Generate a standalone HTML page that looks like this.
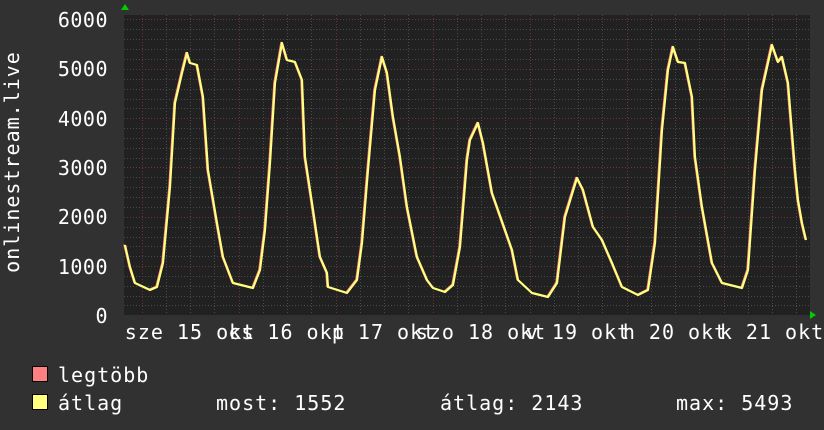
<!DOCTYPE html>
<html><head><meta charset="utf-8"><style>
html,body{margin:0;padding:0;background:#313131;}
svg{display:block;font-family:"DejaVu Sans Mono","Liberation Mono",monospace;}
</style></head><body>
<svg width="824" height="430" viewBox="0 0 824 430" xmlns="http://www.w3.org/2000/svg">
<rect width="824" height="430" fill="#313131"/>
<rect x="124" y="15" width="686" height="300" fill="#212121"/>
<g stroke="#4a4a4a" stroke-width="1" stroke-dasharray="1,2">
<path d="M124 29.5H810M124 39.5H810M124 49.5H810M124 59.5H810M124 79.5H810M124 89.5H810M124 99.5H810M124 108.5H810M124 128.5H810M124 138.5H810M124 148.5H810M124 158.5H810M124 177.5H810M124 187.5H810M124 197.5H810M124 207.5H810M124 227.5H810M124 237.5H810M124 246.5H810M124 256.5H810M124 276.5H810M124 286.5H810M124 296.5H810M124 305.5H810"/>
<path d="M166.5 15V315M190.5 15V315M214.5 15V315M263.5 15V315M287.5 15V315M311.5 15V315M360.5 15V315M384.5 15V315M408.5 15V315M457.5 15V315M481.5 15V315M505.5 15V315M554.5 15V315M578.5 15V315M602.5 15V315M651.5 15V315M675.5 15V315M699.5 15V315M748.5 15V315M772.5 15V315M796.5 15V315"/>
</g>
<g stroke="#6e3434" stroke-width="1" stroke-dasharray="1,2">
<path d="M124 19.5H810M124 69.5H810M124 118.5H810M124 167.5H810M124 217.5H810M124 266.5H810"/>
<path d="M142.5 15V315M239.5 15V315M336.5 15V315M433.5 15V315M530.5 15V315M627.5 15V315M724.5 15V315"/>
</g>
<path d="M121 10l4-6 4 6z" fill="#00cc00"/>
<path d="M810 311l6 4-6 4z" fill="#00cc00"/>
<g fill="none" stroke-linejoin="round">
<polyline stroke="#ff8080" stroke-width="1.5" transform="translate(-1,-0.5)" points="125,245 130,267 135,283 150,290 157,287 163,263 170,187 175,103 182,73 187,53 190,63 197,65 203,97 208,170 217,223 223,257 233,283 253,288 260,270 265,230 270,163 275,83 282,43 287,60 295,62 302,80 305,157 312,203 320,257 327,273 328,287 347,293 357,280 362,243 368,170 375,90 382,57 387,73 393,117 400,157 407,207 417,257 427,280 433,288 445,292 453,285 460,247 467,160 470,140 478,123 483,143 492,193 505,230 512,250 518,280 532,293 548,297 557,283 565,217 577,178 583,190 593,227 602,240 612,263 622,287 638,295 648,290 655,243 662,130 668,70 673,47 678,62 685,63 692,97 695,157 702,207 712,263 722,283 742,288 748,270 755,170 762,90 772,45 778,62 782,57 788,83 795,170 798,200 802,223 806,240"/>
<polyline stroke="#ffff80" stroke-width="2.2" points="125,245 130,267 135,283 150,290 157,287 163,263 170,187 175,103 182,73 187,53 190,63 197,65 203,97 208,170 217,223 223,257 233,283 253,288 260,270 265,230 270,163 275,83 282,43 287,60 295,62 302,80 305,157 312,203 320,257 327,273 328,287 347,293 357,280 362,243 368,170 375,90 382,57 387,73 393,117 400,157 407,207 417,257 427,280 433,288 445,292 453,285 460,247 467,160 470,140 478,123 483,143 492,193 505,230 512,250 518,280 532,293 548,297 557,283 565,217 577,178 583,190 593,227 602,240 612,263 622,287 638,295 648,290 655,243 662,130 668,70 673,47 678,62 685,63 692,97 695,157 702,207 712,263 722,283 742,288 748,270 755,170 762,90 772,45 778,62 782,57 788,83 795,170 798,200 802,223 806,240"/>
</g>
<g fill="#ffffff" font-size="20" text-anchor="end" letter-spacing="0.5">
<text x="108" y="27">6000</text>
<text x="108" y="76">5000</text>
<text x="108" y="126">4000</text>
<text x="108" y="175">3000</text>
<text x="108" y="224">2000</text>
<text x="108" y="274">1000</text>
<text x="108" y="323">0</text>
</g>
<text transform="translate(19,162) rotate(-90)" fill="#fff" font-size="20" text-anchor="middle" letter-spacing="1">onlinestream.live</text>
<g fill="#ffffff" font-size="20" text-anchor="middle" letter-spacing="1">
<text x="190" y="339">sze 15 okt</text>
<text x="287" y="339">cs 16 okt</text>
<text x="384" y="339">p 17 okt</text>
<text x="481" y="339">szo 18 okt</text>
<text x="578" y="339">v 19 okt</text>
<text x="675" y="339">h 20 okt</text>
<text x="772" y="339">k 21 okt</text>
</g>
<rect x="32.5" y="366.5" width="15" height="15" fill="#ff8080" stroke="#000"/>
<rect x="32.5" y="394.5" width="15" height="15" fill="#ffff80" stroke="#000"/>
<g fill="#ffffff" font-size="20" letter-spacing="1">
<text x="58" y="382">legtöbb</text>
<text x="58" y="410">átlag</text>
<text x="216" y="410">most: 1552</text>
<text x="440" y="410">átlag: 2143</text>
<text x="676" y="410">max: 5493</text>
</g>
</svg>
</body></html>
